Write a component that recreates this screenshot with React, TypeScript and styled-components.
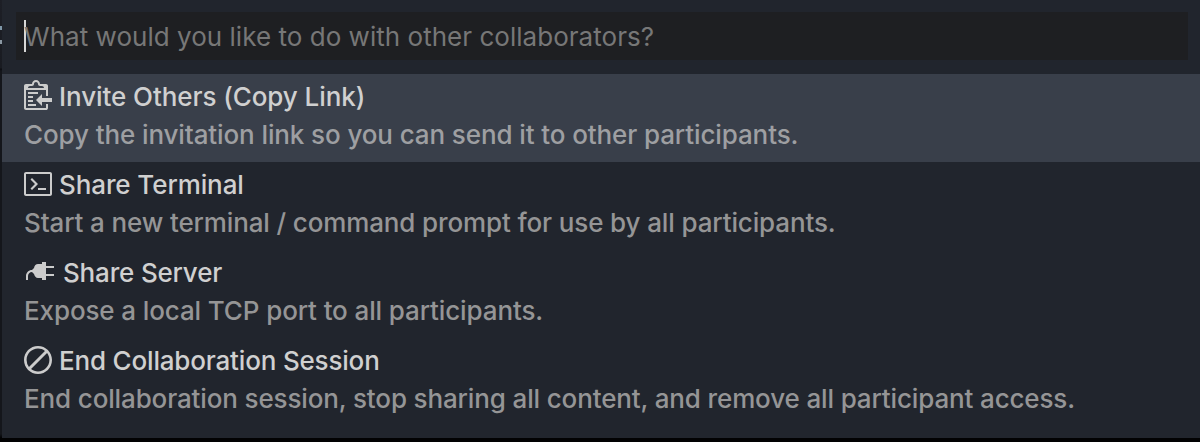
import React from "react";
import styled, { createGlobalStyle } from "styled-components";

const GlobalStyle = createGlobalStyle`
  * { box-sizing: border-box; }
  body { margin: 0; background: #08090c; overflow: hidden; }
`;

const Screen = styled.div`
  position: relative;
  width: 1200px;
  height: 442px;
  padding: 0 0 4px 2px;
  background: linear-gradient(#1d1f26 0, #191b21 68px, #0c0d11 69px, #14161b 71px, #14161b 434px, #020203 438px);
  font-family: Inter, "Liberation Sans", sans-serif;
  font-size: 26px;
`;

const EditorGlyph = styled.span`
  position: absolute;
  left: 0;
  top: 26px;
  width: 2px;
  height: 18px;
  border-top: 4px solid #7f97a8;
  border-bottom: 4px solid #8b98a3;
`;

const Panel = styled.div`
  height: 438px;
  padding-top: 12px;
  background: #21252d;
`;

const InputBox = styled.div`
  display: flex;
  align-items: center;
  height: 48px;
  margin: 0 12px 14px 14px;
  padding-left: 8px;
  background: #1e1f22;
`;

const Caret = styled.span`
  width: 2px;
  height: 32px;
  margin-right: -2px;
  background: #d6d6d6;
`;

const Line = styled.span<{ $track: number }>`
  white-space: pre;
  letter-spacing: ${(p) => p.$track}px;
`;

const Placeholder = styled(Line)`
  padding-top: 2px;
  line-height: 32px;
  color: #777777;
`;

const Row = styled.div<{ $selected?: boolean }>`
  height: 88px;
  padding: 4px 22px 0;
  background: ${(p) => (p.$selected ? "#393f4a" : "transparent")};
`;

const Heading = styled.div<{ $inset?: number }>`
  display: flex;
  height: 38px;
  padding-left: ${(p) => p.$inset ?? 0}px;
`;

const Icon = styled.svg<{ $drop: number; $gap: number }>`
  flex: none;
  width: 28px;
  height: 32px;
  margin: ${(p) => p.$drop}px ${(p) => p.$gap}px 0 0;
  fill: #cccccc;
`;

const Label = styled(Line)`
  line-height: 38px;
  font-weight: 500;
  color: #d0d0d0;
`;

const Detail = styled(Line)<{ $selected?: boolean }>`
  display: block;
  line-height: 38px;
  font-weight: 500;
  color: ${(p) => (p.$selected ? "#9e9fa2" : "#959596")};
`;

const items = [
  {
    label: "Invite Others (Copy Link)",
    detail: "Copy the invitation link so you can send it to other participants.",
    selected: true,
    drop: 0,
    gap: 7,
    inset: 0,
    labelTrack: -0.08,
    detailTrack: -0.11,
    path: "M2 13h4v1H2v-1zm5-6H2v1h5V7zm2 3V8l-3 3 3 3v-2h5v-2H9zM4.5 9H2v1h2.5V9zM2 12h2.5v-1H2v1zm9 1h1v2c-.02.28-.11.52-.3.7-.19.18-.42.28-.7.3H1c-.55 0-1-.45-1-1V4c0-.55.45-1 1-1h3c0-1.11.89-2 2-2s2 .89 2 2h3c.55 0 1 .45 1 1v5h-1V6H1v9h10v-2zM2 5h8c0-.55-.45-1-1-1H8c-.55 0-1-.45-1-1s-.45-1-1-1-1 .45-1 1-.45 1-1 1H3c-.55 0-1 .45-1 1z",
  },
  {
    label: "Share Terminal",
    detail: "Start a new terminal / command prompt for use by all participants.",
    drop: 2,
    gap: 7,
    inset: 0,
    labelTrack: -0.1,
    detailTrack: -0.13,
    path: "M7 10h4v1H7v-1zm-3 1l3-3-3-3-.75.75L5.5 8l-2.25 2.25L4 11zm10-8v10c0 .55-.45 1-1 1H1c-.55 0-1-.45-1-1V3c0-.55.45-1 1-1h12c.55 0 1 .45 1 1zm-1 0H1v10h12V3z",
  },
  {
    label: "Share Server",
    detail: "Expose a local TCP port to all participants.",
    drop: 2,
    gap: 9,
    inset: 2,
    labelTrack: -0.18,
    detailTrack: -0.12,
    path: "M14 6V5h-4V3H8v1H6c-1.03 0-1.77.81-2 2L3 7c-1.66 0-3 1.34-3 3v2h1v-2c0-1.11.89-2 2-2l1 1c.25 1.16.98 2 2 2h2v1h2v-2h4V9h-4V6h4z",
  },
  {
    label: "End Collaboration Session",
    detail: "End collaboration session, stop sharing all content, and remove all participant access.",
    drop: 2,
    gap: 7,
    inset: 0,
    labelTrack: -0.18,
    detailTrack: -0.14,
    path: "M7 1C3.14 1 0 4.14 0 8s3.14 7 7 7 7-3.14 7-7-3.14-7-7-7zm0 1.3c1.3 0 2.5.44 3.47 1.17l-8 8A5.755 5.755 0 0 1 1.3 8c0-3.14 2.56-5.7 5.7-5.7zm0 11.41c-1.3 0-2.5-.44-3.47-1.17l8-8c.73.97 1.17 2.17 1.17 3.47 0 3.14-2.56 5.7-5.7 5.7z",
  },
];

export default function App() {
  return (
    <>
      <GlobalStyle />
      <Screen>
        <EditorGlyph />
        <Panel>
          <InputBox>
            <Caret />
            <Placeholder $track={0.03}>What would you like to do with other collaborators?</Placeholder>
          </InputBox>
          {items.map((item) => (
            <Row key={item.label} $selected={item.selected}>
              <Heading $inset={item.inset}>
                <Icon viewBox="0 0 14 16" $drop={item.drop} $gap={item.gap}>
                  <path d={item.path} />
                </Icon>
                <Label $track={item.labelTrack}>{item.label}</Label>
              </Heading>
              <Detail $track={item.detailTrack} $selected={item.selected}>
                {item.detail}
              </Detail>
            </Row>
          ))}
        </Panel>
      </Screen>
    </>
  );
}
